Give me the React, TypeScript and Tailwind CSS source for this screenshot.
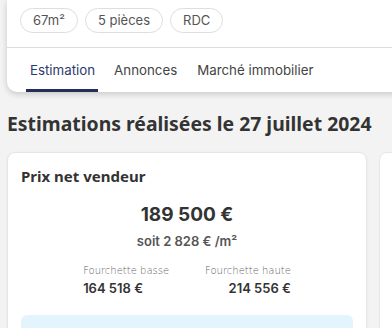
import React from 'react';

const chips = ['67m²', '5 pièces', 'RDC'];
const tabs = ['Estimation', 'Annonces', 'Marché immobilier'];

const App: React.FC = () => {
  return (
    <div className="w-[392px] h-[328px] overflow-hidden bg-[#f3f3f3] font-['Inter',sans-serif]">
      {/* Property card (top cut off) */}
      <div className="ml-[7px] w-[420px] bg-white rounded-bl-[10px] shadow-[0_2px_6px_rgba(0,0,0,0.18)]">
        <div className="flex gap-[7px] pl-[13px] pt-[8px] pb-[14px]">
          {chips.map((c) => (
            <span
              key={c}
              className="h-[25px] px-[12px] flex items-center rounded-full border border-[#dedede] text-[13px] text-[#555]"
            >
              {c}
            </span>
          ))}
        </div>
        <div className="border-t border-[#dcdcdc] flex pl-[19px] text-[13.3px]">
          {tabs.map((t, i) => (
            <div
              key={t}
              className={
                i === 0
                  ? 'h-[44px] pl-[4px] pr-[3px] mr-[16px] flex items-center text-[#2d3a6e] border-b-[3px] border-[#232e5c] pt-[4px]'
                  : 'h-[44px] mr-[20px] flex items-center text-[#444] pt-[1px]'
              }
            >
              {t}
            </div>
          ))}
        </div>
      </div>

      {/* Heading */}
      <h2 className="mt-[20px] ml-[7px] text-[19.4px] leading-[24px] font-bold text-[#333] font-['Noto_Sans',sans-serif] whitespace-nowrap">
        Estimations réalisées le 27 juillet 2024
      </h2>

      {/* Cards row */}
      <div className="mt-[16px] flex gap-[12px] pl-[7px]">
        <div className="w-[360px] shrink-0 h-[200px] bg-white rounded-[8px] border border-[#e6e6e6] shadow-[0_1px_3px_rgba(0,0,0,0.06)] px-[13px] pt-[13px]">
          <div className="text-[15px] leading-[20px] font-bold text-[#333] font-['Noto_Sans',sans-serif]">
            Prix net vendeur
          </div>
          <div className="mt-[17px] text-center text-[19px] leading-[24px] font-bold text-[#333]">
            189 500 €
          </div>
          <div className="mt-[6px] text-center text-[13px] leading-[17px] font-semibold text-[#555]">
            soit 2 828 € /m²
          </div>
          <div className="mt-[14px] flex justify-center gap-[36px]">
            <div className="flex flex-col">
              <span className="text-[10px] leading-[13px] text-[#666] font-['DejaVu_Sans',sans-serif] font-light">
                Fourchette basse
              </span>
              <span className="mt-[3px] text-[13px] leading-[17px] font-semibold text-[#333]">164 518 €</span>
            </div>
            <div className="flex flex-col items-end">
              <span className="text-[10px] leading-[13px] text-[#666] font-['DejaVu_Sans',sans-serif] font-light">
                Fourchette haute
              </span>
              <span className="mt-[3px] text-[13px] leading-[17px] font-semibold text-[#333]">214 556 €</span>
            </div>
          </div>
          <div className="mt-[18px] h-[40px] rounded-[6px] bg-[#e4f4fc]" />
        </div>
        <div className="w-[200px] shrink-0 h-[200px] bg-white rounded-[8px] border border-[#e6e6e6]" />
      </div>
    </div>
  );
};

export default App;
